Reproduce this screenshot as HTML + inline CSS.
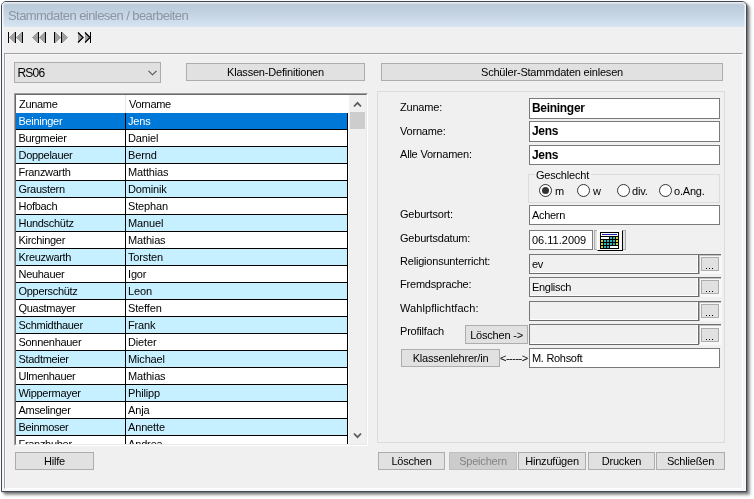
<!DOCTYPE html>
<html><head><meta charset="utf-8"><title>Stammdaten</title>
<style>
html,body{margin:0;padding:0;background:#fff;}
body{width:754px;height:499px;overflow:hidden;position:relative;font-family:"Liberation Sans",sans-serif;font-size:11px;color:#000;letter-spacing:-0.3px;}
.abs{position:absolute;}
#win{position:absolute;left:1px;top:1px;width:744px;height:489px;border:1px solid #424954;border-radius:5px 5px 0 0;background:#f0f0f0;box-shadow:3px 3px 3px rgba(0,0,0,.42),1px 1px 2px rgba(0,0,0,.3);overflow:hidden;will-change:transform;}
#inner{position:absolute;left:0;top:0;right:0;bottom:0;border:1px solid #f4f8fc;border-top-color:#e6ebf2;border-radius:4px 4px 0 0;box-shadow:inset 0 0 0 1px rgba(255,255,255,.4);}
#title{position:absolute;left:0;top:0;width:744px;height:25px;background:linear-gradient(#c3ccd7 0%,#c0cbd8 8%,#bccddd 22%,#c8d6e4 55%,#d2e1f0 90%,#dbe4ee 100%);border-bottom:1px solid #eef1f5;}
#title span{position:absolute;left:6px;top:6px;font-size:13px;color:#8b95a3;white-space:nowrap;letter-spacing:-0.56px;}
#panel{position:absolute;left:2px;top:51px;width:739px;height:436px;border-top:1px solid #a0a0a0;border-left:1px solid #a0a0a0;border-right:1px solid #fff;border-bottom:1px solid #fff;box-sizing:border-box;}
#panel2{position:absolute;left:3px;top:52px;width:737px;height:434px;box-sizing:border-box;border-top:1px solid #f9f9f9;border-left:1px solid #f9f9f9;}
.btn{position:absolute;box-sizing:border-box;border:1px solid #adadad;background:#e1e1e1;text-align:center;font-size:11px;line-height:17px;white-space:nowrap;letter-spacing:-0.2px;}
.btn.dis{background:#cccccc;border-color:#bfbfbf;color:#838383;}
#combo{position:absolute;left:12px;top:60px;width:147px;height:21px;box-sizing:border-box;border:1px solid #adadad;background:#e1e1e1;}
#combo span{position:absolute;left:2.5px;top:3px;font-size:12px;letter-spacing:-0.8px;}
#listo{position:absolute;left:12px;top:91px;width:354px;height:353px;box-sizing:border-box;border-top:1px solid #a0a0a0;border-left:1px solid #a0a0a0;border-right:1px solid #fff;border-bottom:1px solid #fff;}
#list{position:absolute;left:0;top:0;width:352px;height:351px;box-sizing:border-box;border-top:1px solid #696969;border-left:1px solid #696969;border-right:1px solid #e8e8e8;border-bottom:1px solid #e8e8e8;background:#fff;overflow:hidden;}
#list .hdr{position:absolute;left:0;top:0;width:331px;height:18px;background:#fff;}
#list .hdr span{position:absolute;top:3px;}
.row{position:absolute;left:0;width:331px;height:16px;border-bottom:1px solid #000;}
.row.sel{background:#0078d7;color:#fff;}
.row.alt{background:#c6efff;}
.row.wh{background:#fff;}
.row span{position:absolute;top:2px;white-space:nowrap;}
.c1{left:2.5px;}
.c2{left:112px;letter-spacing:-0.15px;}
#vline{position:absolute;left:109px;top:18px;width:1px;height:340px;background:#000;}
#vline2{position:absolute;left:331px;top:18px;width:1px;height:340px;background:#000;}
#hline{position:absolute;left:109px;top:0;width:1px;height:18px;background:#e5e5e5;}
#sb{position:absolute;left:333px;top:0;width:17px;height:349px;background:#f0f0f0;}
#thumb{position:absolute;left:1px;top:17px;width:15px;height:17px;background:#cdcdcd;}
#rpanel{position:absolute;left:375px;top:89px;width:348px;height:352px;box-sizing:border-box;border:1px solid #dcdcdc;}
.lbl{position:absolute;white-space:nowrap;font-size:11px;letter-spacing:-0.2px;}
.inp{position:absolute;box-sizing:border-box;border:1px solid #7a7a7a;background:#fff;}
.inp span{position:absolute;left:2px;top:3px;white-space:nowrap;font-size:11px;}
.inp b{position:absolute;left:2px;top:2px;white-space:nowrap;font-size:12px;font-weight:bold;letter-spacing:-0.3px;}
.sunk{position:absolute;left:527px;width:192px;height:20px;}
.sunk .f{position:absolute;left:0;top:0;width:170px;height:20px;box-sizing:border-box;border-top:1px solid #767676;border-left:1px solid #767676;border-right:1px solid #6a6a6a;border-bottom:1px solid #6a6a6a;background:#f0f0f0;}
.sunk .f i{position:absolute;left:0;top:0;right:0;bottom:0;border-right:1px solid #fff;border-bottom:1px solid #fff;}
.sunk .f span{position:absolute;left:2px;top:3px;font-size:11px;white-space:nowrap;font-style:normal;}
.sunk .t{position:absolute;left:170px;top:0;width:22px;height:2px;background:linear-gradient(#6e6e6e 50%,#c4c4c4 50%);}
.sunk .r{position:absolute;left:170px;top:1px;width:1px;height:19px;background:#b4b4b4;}
.sunk .w{position:absolute;left:171px;top:2px;width:22px;height:18px;background:#f8f8f8;}
.sunk .b{position:absolute;left:172px;top:3px;width:18px;height:14px;box-sizing:border-box;border:1px solid #adadad;background:#e1e1e1;}
.sunk .b u{position:absolute;top:10px;width:1px;height:1px;background:#000;}
.radio{position:absolute;width:13px;height:13px;box-sizing:border-box;border:1px solid #333;border-radius:50%;background:#fff;}
.radio.on::after{content:"";position:absolute;left:2px;top:2px;width:7px;height:7px;border-radius:50%;background:#333;}
</style></head><body>
<div id="win">
 <div id="title"><span>Stammdaten einlesen / bearbeiten</span></div>
 <div id="inner"></div>
 <!-- toolbar icons -->
 <svg class="abs" style="left:0;top:26px" width="120" height="24" viewBox="2 28 120 24" shape-rendering="crispEdges">
  <g fill="#a0a0a0">
   <polygon points="9,37.5 15,32 15,43"/><polygon points="16,37.5 22,32 22,43"/>
   <polygon points="32,37.5 38,32 38,43"/><polygon points="39,37.5 45,32 45,43"/>
   <polygon points="55,32 61,37.5 55,43"/><polygon points="62,32 68,37.5 62,43"/>
   <polygon points="78,32 84,37.5 78,43"/><polygon points="85,32 91,37.5 85,43"/>
  </g>
  <g fill="#000">
   <rect x="8" y="32" width="1" height="11"/><rect x="15" y="32" width="1" height="11"/><rect x="22" y="32" width="1" height="11"/>
   <rect x="38" y="32" width="1" height="11"/><rect x="45" y="32" width="1" height="11"/>
   <rect x="54" y="32" width="1" height="11"/><rect x="61" y="32" width="1" height="11"/>
   <rect x="90" y="32" width="1" height="11"/>
  </g>
  <g stroke="#000" stroke-width="1.2" fill="none" shape-rendering="auto">
   <polyline points="78,32.5 83,37.5 78,42.5"/><polyline points="85,32.5 90,37.5 85,42.5"/>
  </g>
 </svg>
 <div id="panel"></div><div id="panel2"></div>

 <div id="combo"><span>RS06</span>
  <svg class="abs" style="left:132px;top:6px" width="11" height="7" viewBox="0 0 11 7"><polyline points="1.5,1.8 5.5,5.8 9.5,1.8" fill="none" stroke="#505050" stroke-width="1.1"/></svg>
 </div>
 <div class="btn" style="left:184px;top:61px;width:179px;height:18px;">Klassen-Definitionen</div>
 <div class="btn" style="left:379px;top:61px;width:342px;height:18px;">Schüler-Stammdaten einlesen</div>

 <div id="listo"><div id="list">
  <div class="hdr"><span style="left:3px">Zuname</span><span style="left:113px">Vorname</span></div>
  <div class="row sel" style="top:18px"><span class="c1">Beininger</span><span class="c2">Jens</span></div>
<div class="row wh" style="top:35px"><span class="c1">Burgmeier</span><span class="c2">Daniel</span></div>
<div class="row alt" style="top:52px"><span class="c1">Doppelauer</span><span class="c2">Bernd</span></div>
<div class="row wh" style="top:69px"><span class="c1">Franzwarth</span><span class="c2">Matthias</span></div>
<div class="row alt" style="top:86px"><span class="c1">Graustern</span><span class="c2">Dominik</span></div>
<div class="row wh" style="top:103px"><span class="c1">Hofbach</span><span class="c2">Stephan</span></div>
<div class="row alt" style="top:120px"><span class="c1">Hundschütz</span><span class="c2">Manuel</span></div>
<div class="row wh" style="top:137px"><span class="c1">Kirchinger</span><span class="c2">Mathias</span></div>
<div class="row alt" style="top:154px"><span class="c1">Kreuzwarth</span><span class="c2">Torsten</span></div>
<div class="row wh" style="top:171px"><span class="c1">Neuhauer</span><span class="c2">Igor</span></div>
<div class="row alt" style="top:188px"><span class="c1">Opperschütz</span><span class="c2">Leon</span></div>
<div class="row wh" style="top:205px"><span class="c1">Quastmayer</span><span class="c2">Steffen</span></div>
<div class="row alt" style="top:222px"><span class="c1">Schmidthauer</span><span class="c2">Frank</span></div>
<div class="row wh" style="top:239px"><span class="c1">Sonnenhauer</span><span class="c2">Dieter</span></div>
<div class="row alt" style="top:256px"><span class="c1">Stadtmeier</span><span class="c2">Michael</span></div>
<div class="row wh" style="top:273px"><span class="c1">Ulmenhauer</span><span class="c2">Mathias</span></div>
<div class="row alt" style="top:290px"><span class="c1">Wippermayer</span><span class="c2">Philipp</span></div>
<div class="row wh" style="top:307px"><span class="c1">Amselinger</span><span class="c2">Anja</span></div>
<div class="row alt" style="top:324px"><span class="c1">Beinmoser</span><span class="c2">Annette</span></div>
<div class="row wh" style="top:341px"><span class="c1">Franzhuber</span><span class="c2">Andrea</span></div>

  <div id="hline"></div><div id="vline"></div><div id="vline2"></div>
  <div id="sb"><div id="thumb"></div>
   <svg class="abs" style="left:3px;top:6px" width="11" height="7" viewBox="0 0 11 7"><polyline points="2,5.5 5.5,1.8 9,5.5" fill="none" stroke="#5c5c5c" stroke-width="1.8"/></svg>
   <svg class="abs" style="left:3px;top:337px" width="11" height="7" viewBox="0 0 11 7"><polyline points="2,1.5 5.5,5.2 9,1.5" fill="none" stroke="#5c5c5c" stroke-width="1.8"/></svg>
  </div>
 </div></div>

 <div id="rpanel"></div>
 <div class="lbl" style="left:398px;top:99px">Zuname:</div>
 <div class="lbl" style="left:398px;top:123px">Vorname:</div>
 <div class="lbl" style="left:398px;top:146px">Alle Vornamen:</div>
 <div class="lbl" style="left:398px;top:206px">Geburtsort:</div>
 <div class="lbl" style="left:398px;top:230px">Geburtsdatum:</div>
 <div class="lbl" style="left:398px;top:253px">Religionsunterricht:</div>
 <div class="lbl" style="left:398px;top:276px">Fremdsprache:</div>
 <div class="lbl" style="left:398px;top:300px;letter-spacing:0.08px">Wahlpflichtfach:</div>
 <div class="lbl" style="left:398px;top:323px">Profilfach</div>

 <div class="inp" style="left:527px;top:96px;width:191px;height:21px"><b>Beininger</b></div>
 <div class="inp" style="left:527px;top:119px;width:191px;height:21px"><b>Jens</b></div>
 <div class="inp" style="left:527px;top:143px;width:191px;height:20px"><b>Jens</b></div>

 <div class="abs" style="left:526px;top:172px;width:192px;height:29px;box-sizing:border-box;border:1px solid #dcdcdc;"></div>
 <div class="lbl" style="left:532px;top:168px;line-height:11px;background:#f0f0f0;padding:0 2px;">Geschlecht</div>
 <div class="radio on" style="left:537px;top:182px"></div><div class="lbl" style="left:553px;top:183px">m</div>
 <div class="radio" style="left:575px;top:182px"></div><div class="lbl" style="left:591px;top:183px">w</div>
 <div class="radio" style="left:615px;top:182px"></div><div class="lbl" style="left:630px;top:183px">div.</div>
 <div class="radio" style="left:657px;top:182px"></div><div class="lbl" style="left:672px;top:183px">o.Ang.</div>

 <div class="inp" style="left:527px;top:203px;width:191px;height:20px"><span>Achern</span></div>
 <div class="inp" style="left:527px;top:228px;width:64px;height:20px"><span style="letter-spacing:0">06.11.2009</span></div>

 <!-- calendar button -->
 <div class="abs" style="left:592px;top:228px;width:32px;height:20px;box-sizing:border-box;border:1px solid #adadad;background:#e1e1e1"></div>
 <div class="abs" style="left:595px;top:228px;width:26px;height:21px;box-sizing:border-box;border-top:1px solid #fff;border-left:1px solid #fff;border-right:1px solid #000;border-bottom:1px solid #000;background:#f6f6f6"></div>
 <svg class="abs" style="left:598px;top:230px" width="19" height="17" viewBox="0 0 19 17" shape-rendering="crispEdges">
  <rect width="19" height="17" fill="#000"/>
  <rect x="1" y="1" width="17" height="3" fill="#fff"/><rect x="2" y="2" width="15" height="1" fill="#2020b0"/>
  <rect x="1" y="5" width="8" height="2" fill="#fff"/>
  <g fill="#22b8b8"><rect x="10" y="5" width="2" height="2"/><rect x="13" y="5" width="2" height="2"/>
   <rect x="4" y="8" width="2" height="2"/><rect x="7" y="8" width="2" height="2"/><rect x="10" y="8" width="2" height="2"/><rect x="13" y="8" width="2" height="2"/>
   <rect x="4" y="11" width="2" height="2"/><rect x="7" y="11" width="2" height="2"/><rect x="10" y="11" width="2" height="2"/><rect x="13" y="11" width="2" height="2"/>
   <rect x="4" y="14" width="2" height="2"/><rect x="7" y="14" width="2" height="2"/></g>
  <g fill="#d4cc38"><rect x="16" y="5" width="2" height="2"/><rect x="1" y="8" width="2" height="2"/><rect x="16" y="8" width="2" height="2"/>
   <rect x="1" y="11" width="2" height="2"/><rect x="16" y="11" width="2" height="2"/><rect x="1" y="14" width="2" height="2"/></g>
  <rect x="10" y="14" width="8" height="2" fill="#fff"/>
 </svg>

 <div class="sunk" style="top:252px"><div class="f"><i></i><span>ev</span></div><div class="t"></div><div class="r"></div><div class="w"></div><div class="b"><u style="left:4px"></u><u style="left:7px"></u><u style="left:10px"></u></div></div>
 <div class="sunk" style="top:275px"><div class="f"><i></i><span>Englisch</span></div><div class="t"></div><div class="r"></div><div class="w"></div><div class="b"><u style="left:4px"></u><u style="left:7px"></u><u style="left:10px"></u></div></div>
 <div class="sunk" style="top:299px"><div class="f"><i></i></div><div class="t"></div><div class="r"></div><div class="w"></div><div class="b"><u style="left:4px"></u><u style="left:7px"></u><u style="left:10px"></u></div></div>
 <div class="sunk" style="top:322px;height:21px"><div class="f" style="height:21px"><i></i></div><div class="t"></div><div class="r"></div><div class="w" style="height:19px"></div><div class="b" style="top:4px"><u style="left:4px"></u><u style="left:7px"></u><u style="left:10px"></u></div></div>

 <div class="btn" style="left:463px;top:323px;width:63px;height:19px;line-height:18px">Löschen -&gt;</div>
 <div class="btn" style="left:399px;top:347px;width:99px;height:18px;line-height:17px;letter-spacing:-0.2px">Klassenlehrer/in</div>
 <div class="lbl" style="left:498px;top:350px;letter-spacing:-0.5px">&lt;-----&gt;</div>
 <div class="inp" style="left:527px;top:346px;width:191px;height:20px"><span>M. Rohsoft</span></div>

 <div class="btn" style="left:13px;top:450px;width:79px;height:18px;">Hilfe</div>
 <div class="btn" style="left:376px;top:450px;width:67px;height:18px;">Löschen</div>
 <div class="btn dis" style="left:447px;top:450px;width:68px;height:18px;">Speichern</div>
 <div class="btn" style="left:516px;top:450px;width:68px;height:18px;">Hinzufügen</div>
 <div class="btn" style="left:586px;top:450px;width:67px;height:18px;">Drucken</div>
 <div class="btn" style="left:654px;top:450px;width:69px;height:18px;">Schließen</div>
</div>
</body></html>
